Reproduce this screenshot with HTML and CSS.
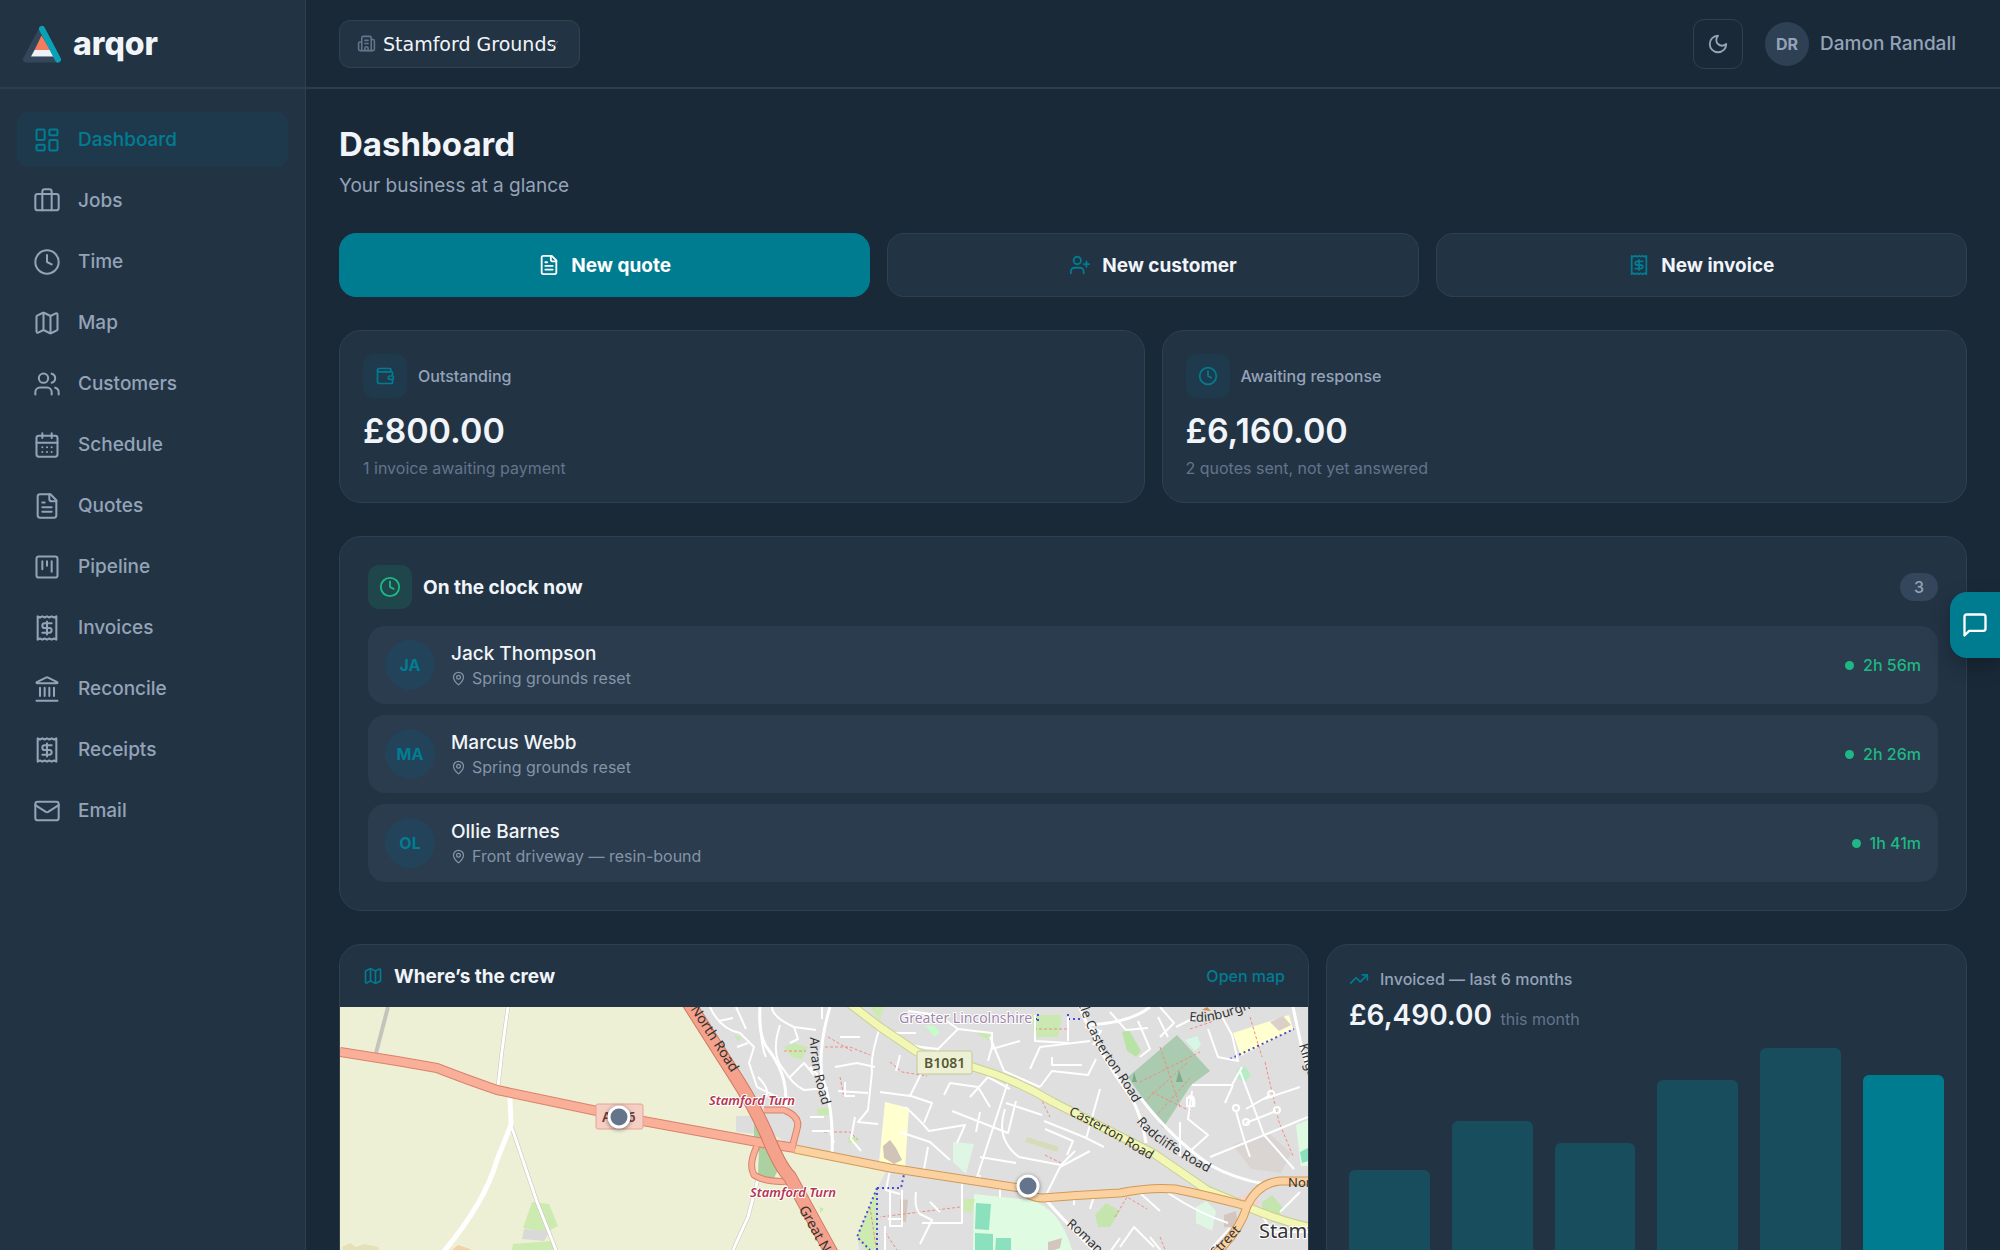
FILE: index.html
```html
<!DOCTYPE html>
<html lang="en">
<head>
    <meta charset="UTF-8">
    <meta name="viewport" content="width=device-width, initial-scale=1.0">
    <title>arqor - Dashboard</title>
    <link rel="stylesheet" href="styles.css">
</head>
<body>

<!-- Icon set -->
<svg class="sprite" aria-hidden="true">
    <symbol id="i-dashboard" viewBox="0 0 24 24"><rect width="7" height="9" x="3" y="3" rx="1"/><rect width="7" height="5" x="14" y="3" rx="1"/><rect width="7" height="9" x="14" y="12" rx="1"/><rect width="7" height="5" x="3" y="16" rx="1"/></symbol>
    <symbol id="i-jobs" viewBox="0 0 24 24"><path d="M16 20V4a2 2 0 0 0-2-2h-4a2 2 0 0 0-2 2v16"/><rect width="20" height="14" x="2" y="6" rx="2"/></symbol>
    <symbol id="i-clock" viewBox="0 0 24 24"><circle cx="12" cy="12" r="10"/><path d="M12 6v6l4 2"/></symbol>
    <symbol id="i-map" viewBox="0 0 24 24"><path d="M14.106 5.553a2 2 0 0 0 1.788 0l3.659-1.83A1 1 0 0 1 21 4.619v12.764a1 1 0 0 1-.553.894l-4.553 2.277a2 2 0 0 1-1.788 0l-4.212-2.106a2 2 0 0 0-1.788 0l-3.659 1.83A1 1 0 0 1 3 19.381V6.618a1 1 0 0 1 .553-.894l4.553-2.277a2 2 0 0 1 1.788 0z"/><path d="M15 5.764v15M9 3.236v15"/></symbol>
    <symbol id="i-users" viewBox="0 0 24 24"><path d="M16 21v-2a4 4 0 0 0-4-4H6a4 4 0 0 0-4 4v2"/><circle cx="9" cy="7" r="4"/><path d="M22 21v-2a4 4 0 0 0-3-3.87M16 3.128a4 4 0 0 1 0 7.744"/></symbol>
    <symbol id="i-calendar" viewBox="0 0 24 24"><path d="M8 2v4M16 2v4M3 10h18"/><rect width="18" height="18" x="3" y="4" rx="2"/><path d="M8 14h.01M12 14h.01M16 14h.01M8 18h.01M12 18h.01M16 18h.01"/></symbol>
    <symbol id="i-file" viewBox="0 0 24 24"><path d="M15 2H6a2 2 0 0 0-2 2v16a2 2 0 0 0 2 2h12a2 2 0 0 0 2-2V7Z"/><path d="M14 2v4a2 2 0 0 0 2 2h4M10 9H8M16 13H8M16 17H8"/></symbol>
    <symbol id="i-kanban" viewBox="0 0 24 24"><rect width="18" height="18" x="3" y="3" rx="2"/><path d="M8 7v7M12 7v4M16 7v9"/></symbol>
    <symbol id="i-receipt" viewBox="0 0 24 24"><path d="M4 2v20l2-1 2 1 2-1 2 1 2-1 2 1 2-1 2 1V2l-2 1-2-1-2 1-2-1-2 1-2-1-2 1Z"/><path d="M16 8h-6a2 2 0 1 0 0 4h4a2 2 0 1 1 0 4H8M12 17.5v-11"/></symbol>
    <symbol id="i-bank" viewBox="0 0 24 24"><path d="M10 18v-7M14 18v-7M18 18v-7M6 18v-7M3 22h18"/><path d="M11.12 2.198a2 2 0 0 1 1.76.006l7.866 3.847c.476.233.31.949-.22.949H3.474c-.53 0-.695-.716-.22-.949z"/></symbol>
    <symbol id="i-mail" viewBox="0 0 24 24"><rect width="20" height="16" x="2" y="4" rx="2"/><path d="m22 7-8.991 5.727a2 2 0 0 1-2.009 0L2 7"/></symbol>
    <symbol id="i-building" viewBox="0 0 24 24"><path d="M10 12h4M10 8h4M14 21v-3a2 2 0 0 0-4 0v3"/><path d="M6 10H4a2 2 0 0 0-2 2v7a2 2 0 0 0 2 2h16a2 2 0 0 0 2-2V9a2 2 0 0 0-2-2h-2"/><path d="M6 21V5a2 2 0 0 1 2-2h8a2 2 0 0 1 2 2v16"/></symbol>
    <symbol id="i-moon" viewBox="0 0 24 24"><path d="M12 3a6 6 0 0 0 9 9 9 9 0 1 1-9-9Z"/></symbol>
    <symbol id="i-user-plus" viewBox="0 0 24 24"><path d="M16 21v-2a4 4 0 0 0-4-4H6a4 4 0 0 0-4 4v2"/><circle cx="9" cy="7" r="4"/><path d="M19 8v6M22 11h-6"/></symbol>
    <symbol id="i-wallet" viewBox="0 0 24 24"><path d="M19 7V4a1 1 0 0 0-1-1H5a2 2 0 0 0 0 4h15a1 1 0 0 1 1 1v4h-3a2 2 0 0 0 0 4h3a1 1 0 0 0 1-1v-2a1 1 0 0 0-1-1"/><path d="M3 5v14a2 2 0 0 0 2 2h15a1 1 0 0 0 1-1v-4"/></symbol>
    <symbol id="i-pin" viewBox="0 0 24 24"><path d="M20 10c0 4.993-5.539 10.193-7.399 11.799a1 1 0 0 1-1.202 0C9.539 20.193 4 14.993 4 10a8 8 0 0 1 16 0"/><circle cx="12" cy="10" r="3"/></symbol>
    <symbol id="i-trend" viewBox="0 0 24 24"><path d="M16 7h6v6"/><path d="m22 7-8.500 8.500-5-5L2 17"/></symbol>
    <symbol id="i-chat" viewBox="0 0 24 24"><path d="M21 15a2 2 0 0 1-2 2H7l-4 4V5a2 2 0 0 1 2-2h14a2 2 0 0 1 2 2z"/></symbol>
</svg>

<div class="app">
    <aside class="sidebar">
        <a class="brand" href="#home">
            <svg class="brand-mark" viewBox="0 0 40 38" aria-hidden="true">
                <path d="M20 4 4 34.500h31" fill="none" stroke="#33465a" stroke-width="6" stroke-linecap="round" stroke-linejoin="round"/>
                <path d="M19.500 10.500 12.500 25h16z" fill="#f47b5c"/>
                <path d="M12.500 25h16l4 6.500H9z" fill="#edf2f9"/>
                <path d="M20 4 36 34.500" fill="none" stroke="#0aa0b5" stroke-width="6" stroke-linecap="round"/>
            </svg>
            arqor
        </a>
        <nav class="nav">
            <a class="active" href="#dashboard"><svg class="icon"><use href="#i-dashboard"/></svg>Dashboard</a>
            <a href="#jobs"><svg class="icon"><use href="#i-jobs"/></svg>Jobs</a>
            <a href="#time"><svg class="icon"><use href="#i-clock"/></svg>Time</a>
            <a href="#map"><svg class="icon"><use href="#i-map"/></svg>Map</a>
            <a href="#customers"><svg class="icon"><use href="#i-users"/></svg>Customers</a>
            <a href="#schedule"><svg class="icon"><use href="#i-calendar"/></svg>Schedule</a>
            <a href="#quotes"><svg class="icon"><use href="#i-file"/></svg>Quotes</a>
            <a href="#pipeline"><svg class="icon"><use href="#i-kanban"/></svg>Pipeline</a>
            <a href="#invoices"><svg class="icon"><use href="#i-receipt"/></svg>Invoices</a>
            <a href="#reconcile"><svg class="icon"><use href="#i-bank"/></svg>Reconcile</a>
            <a href="#receipts"><svg class="icon"><use href="#i-receipt"/></svg>Receipts</a>
            <a href="#email"><svg class="icon"><use href="#i-mail"/></svg>Email</a>
        </nav>
    </aside>

    <div class="page">
        <header class="topbar">
            <div class="company">
                <svg class="icon"><use href="#i-building"/></svg>
                <select aria-label="Company">
                    <option>Stamford Grounds</option>
                </select>
                <svg class="company-arrow" viewBox="0 0 10 10" aria-hidden="true"><path d="M2 6l2 2 5-6"/></svg>
            </div>
            <div class="account">
                <button class="theme" aria-label="Toggle theme"><svg class="icon"><use href="#i-moon"/></svg></button>
                <a class="user" href="#profile"><span class="user-initials">DR</span>Damon Randall</a>
            </div>
        </header>

        <main>
            <div class="heading">
                <h1>Dashboard</h1>
                <p>Your business at a glance</p>
            </div>

            <div class="actions">
                <button class="primary"><svg class="icon"><use href="#i-file"/></svg>New quote</button>
                <button><svg class="icon"><use href="#i-user-plus"/></svg>New customer</button>
                <button><svg class="icon"><use href="#i-receipt"/></svg>New invoice</button>
            </div>

            <div class="stats">
                <section class="card stat">
                    <h2><span class="tile"><svg class="icon"><use href="#i-wallet"/></svg></span>Outstanding</h2>
                    <p class="amount">£800.00</p>
                    <p class="note">1 invoice awaiting payment</p>
                </section>
                <section class="card stat">
                    <h2><span class="tile"><svg class="icon"><use href="#i-clock"/></svg></span>Awaiting response</h2>
                    <p class="amount">£6,160.00</p>
                    <p class="note">2 quotes sent, not yet answered</p>
                </section>
            </div>

            <section class="card clock">
                <div class="clock-head">
                    <span class="tile tile-green"><svg class="icon"><use href="#i-clock"/></svg></span>
                    <h2>On the clock now</h2>
                    <span class="count">3</span>
                </div>
                <ul class="crew">
                    <li>
                        <span class="avatar">JA</span>
                        <div class="who">
                            <strong>Jack Thompson</strong>
                            <span><svg class="icon"><use href="#i-pin"/></svg>Spring grounds reset</span>
                        </div>
                        <span class="elapsed">2h 56m</span>
                    </li>
                    <li>
                        <span class="avatar">MA</span>
                        <div class="who">
                            <strong>Marcus Webb</strong>
                            <span><svg class="icon"><use href="#i-pin"/></svg>Spring grounds reset</span>
                        </div>
                        <span class="elapsed">2h 26m</span>
                    </li>
                    <li>
                        <span class="avatar">OL</span>
                        <div class="who">
                            <strong>Ollie Barnes</strong>
                            <span><svg class="icon"><use href="#i-pin"/></svg>Front driveway — resin-bound</span>
                        </div>
                        <span class="elapsed">1h 41m</span>
                    </li>
                </ul>
            </section>

            <div class="bottom">
                <section class="card where">
                    <div class="where-head">
                        <svg class="icon"><use href="#i-map"/></svg>
                        <h2>Where’s the crew</h2>
                        <a href="#map">Open map</a>
                    </div>
                    <svg class="map" viewBox="0 0 968 300" preserveAspectRatio="xMinYMin slice" role="img" aria-label="Map of Stamford">
                        <defs>
                            <path id="p-north" d="M332-34 350-6 400 72"/>
                            <path id="p-north2" d="M462 200 500 268 530 330"/>
                            <path id="p-arran" d="M474 30C474 60 482 85 492 115"/>
                            <path id="p-little" d="M738-18C746 10 758 38 774 58 788 78 796 92 812 120"/>
                            <path id="p-casterton" d="M730 104C760 118 785 133 830 160"/>
                            <path id="p-radcliffe" d="M799 112C815 132 835 143 880 168"/>
                            <path id="p-edin" d="M849 14C870 17 890 12 960-20"/>
                            <path id="p-kings" d="M959 38 968 68 990 130"/>
                            <path id="p-roman" d="M726 218C740 229 755 245 800 290"/>
                            <path id="p-street" d="M876 250 910 214"/>
                        </defs>
                        <rect width="968" height="300" fill="#eef0d5"/>
                        <!-- built-up area -->
                        <path d="M350 0H968V300H530L517 230 537 181 547 163 455 142 427 123 393 66Z" fill="#e0dfdf"/>
                        <path d="M396 109h20v18l-20-2z" fill="#dddddd"/>
                        <!-- parks, schools and fields -->
                        <g>
                            <path d="M192 195l17 2 9 22-11 6-24-4z" fill="#cdebb0"/>
                            <path d="M184 222l26 2-6 10-22-2z" fill="#d9d9d9"/>
                            <path d="M173 237l38-3 9 12 6 20H166z" fill="#cdebb0"/>
                            <path d="M2 240l8-4 6 4 8-3 14 3 4 10H4z" fill="#e6e0b8"/>
                            <path d="M112 243l6-5 12 4v10h-18z" fill="#f7d0a8"/>
                            <path d="M414 114l14 22-2 10-12-4z" fill="#aad19f"/>
                            <path d="M419 141h12l7 22-4 8-16-3z" fill="#aad19f"/>
                            <path d="M537 181 517 230 530 252h8z" fill="#cdebb0"/>
                            <path d="M545 95l24 6-4 61-26-6z" fill="#ffffcf"/>
                            <path d="M543 139l7-6 6 8 6 12-8 4-10-6z" fill="#d0c3b8"/>
                            <path d="M613 135l21 2-8 30-13-12z" fill="#def6e3"/>
                            <path d="M634 187l56 6q30 8 42 50v57H632z" fill="#dffce2"/>
                            <path d="M636 196l15 1-2 26-14-1zM635 226l18 1v24h-18zM656 231h15v14h-16z" fill="#8be1bd"/>
                            <path d="M624 192h11l-4 14-8-2z" fill="#cdebb0"/>
                            <path d="M837 28 870 64 851 78 823 121 788 70Z" fill="#aacbaf"/>
                            <path d="M792 75l2-10 3 10zM836 75l3-12 4 12z" fill="#7fab8a"/>
                            <path d="M782 25l7-2 12 21-5 6-9-6z" fill="#b9e3a4"/>
                            <path d="M845 33l12-4 4 9-6 6z" fill="#d5f7e5"/>
                            <path d="M893 26l56-18 4 14-52 27z" fill="#ffffcf"/>
                            <path d="M930 15l13-6 8 9-12 6z" fill="#d9d0c9"/>
                            <path d="M897 62l8-2 6 8-6 7-8-4z" fill="#b5ecc4"/>
                            <path d="M956 118l12-5v46l-7 0z" fill="#dffce2"/>
                            <path d="M960 145l8-4v13l-6 2z" fill="#8be1bd"/>
                            <path d="M755 208l11-12 14 8-10 16-12 0z" fill="#c4e6ae"/>
                            <path d="M922 195l10-7 12 14-8 9-14-3z" fill="#c4e6ae"/>
                            <path d="M856 200l10-6 10 10-4 20-16-8z" fill="#def6e3"/>
                            <path d="M884 208l12-4 2 16-14 0z" fill="#d3c6bf"/>
                            <path d="M530 0h14l-4 14z" fill="#cdebb0"/>
                            <path d="M585 18l10 1 5 7-6 4z" fill="#c8facc"/>
                            <path d="M637 27q12-8 15 8M692 8l30 0-4 22-24 0z" fill="#c9e9b0"/>
                            <path d="M444 40l10-4 14 4-6 12-10-2zM394 28l8 2-4 5zM480 200l4 2-4 4z" fill="#c9e9b0"/>
                            <path d="M477 102l12-2v8h-11zM508 130l10 0-2 6-8 0z" fill="#c9e9b0"/>
                            <path d="M687 130l32 10-2 5-32-10z" fill="#d5ddb8"/>
                            <path d="M560 192l8 1-2 22-6-1z" fill="#d3c6bf"/>
                            <path d="M708 235l14-4-2 10-12 4z" fill="#d3c6bf"/>
                            <path d="M893 138l36-12 22 20-10 20-30-4z" fill="#dad5d2"/>
                            <path d="M898 190l12-4 10 10-10 6z" fill="#f3d2d0"/>
                            <path d="M862 3l5-3 4 4z" fill="#d08f55"/>
                        </g>
                        <!-- tracks and footpaths -->
                        <g fill="none" stroke-width="1" stroke-dasharray="3 2" stroke="#f08c82">
                            <path d="M480 40h30l20 8M550 55l12 10 25 4M484 125h26l8 8M500 70l4 20M700 90l10 20M620 200l-80 10M775 210l12-20 20 12M820 230l16 40M925 55l14 60 14 34M850 22l24-8M812 85l40 20M800 75l60-30M820 40l20 60M910 10l12 40M705 148l20 10M694 22h34M488 30l24 14M444 44h22M804 95l44-40M815 110l36-40M530 200l6 40M545 225l12 18"/>
                        </g>
                        <g fill="none" stroke-width="2" stroke-dasharray="2 3" stroke="#4b4bd6">
                            <path d="M537 181h24l4-18M537 181v62M537 181l-20 49 13 13M698 14V4M728 14V4M690 12h8M728 12h12M890 52l64-30"/>
                        </g>
                        <!-- residential streets -->
                        <g class="streets">
                            <path d="M370 0q10 22 30 26l14 14-5 16 8 24 20 10M396 0l10 22M379 14l14-3M420 0q0 38 6 50M408 36l-11 4"/>
                            <path d="M432 0q0 10 22 20l22 3M454 20l4 12-8 4M440 18q-10 30 4 45 8 14 20 20l24-2M450 70l14-14 10 12M470 60l8 8M418 70q12 12 8 20M470 110h14M472 124h18l4 12M482 0v12"/>
                            <path d="M520 0q14 18 30 26l26 0M540 20q-10 30-8 45l-4 38-10 12 20 2M495 60l22-4 18 4M498 84l30 2M515 110l-4 22 10 12M540 85l30 4 12-24M500 30h20M505 75v14l10 0"/>
                            <path d="M548 30q20 10 50 12l20-20-20-14-30-4M618 22l34 4v16l28-8M652 40l-4 14M598 42l-6 20M560 48l-4 16M604 88l6-12 28 4 12 20M630 90l18-20 22 12M612 104l56 22 8-32M568 88l24 8-8 20M640 105l-4 20"/>
                            <path d="M668 75 637 170M666 96l36 12M665 102q-10 30 14 48l42 8 14-14M704 114l40 16 20 10M705 122l28 12-6 14M760 82l-14 50M700 80l12-16 36 4 8-16M690 62l10-22 50-6M650 30l14 34 36 16M565 100q12 10 24 24l36-6-8 18M560 125l30 10 20 18M588 140l-4 22M640 150l36 6"/>
                            <path d="M695 8v26l34 2M728 10v24M712 50v8h30M745 20l16 4-8 14M770 5l16 18 22-2M820 0l14 16-14 14M798 14l12 28-10 8M818 10l10 20M836 20l20-10M868 22l10 28 20 4-6-26M880 6l12 22M852 78l40 0 10-18M893 78l-8 18M900 64l24 64 30 34M870 150l64-26 34-14M896 104q8 30 14 46M930 88l-24 14M936 104l-30 12M960 80l-36 12M852 84l-4 28 20 16-22 20M840 115v34M848 90q8-4 6 10"/>
                            <path d="M705 190l15-30 30-16M640 168l-2 10M550 163l-4 20 14 4M550 183v36h12V183M548 212h14M545 243v-24M576 185q-2 16 4 22l12 6-12 24M622 176v40l-40 0M590 195l10 10M660 182v8M734 190v8M755 186l-5 16M800 186l20 18M828 186q30 20 60 30M780 240l14-20 20 20M810 230l24 30M770 245l10-14M920 205l12 20 36 0M870 243l20-22M884 190l30 16M940 205l20-20"/>
                            <circle cx="931" cy="87" r="3"/>
                            <circle cx="937" cy="103" r="3"/>
                            <circle cx="896" cy="101" r="3"/>
                            <circle cx="906" cy="115" r="3"/>
                            <rect x="847" y="91" width="6" height="8"/>
                        </g>
                        <!-- minor roads -->
                        <g class="minor-case">
                            <path d="M48 0 36 46M168 0Q162 40 158 80M170 90 171 118 157 153Q145 195 105 243L90 270M171 118 197 195 216 243 230 290M418 172 408 210 393 243"/>
                        </g>
                        <g class="minor">
                            <path d="M168 0Q162 40 158 80M170 90 171 118 157 153Q145 195 105 243L90 270M171 118 197 195 216 243 230 290M418 172 408 210 393 243"/>
                            <path d="M490 0Q478 40 482 70 494 100 492 148M420 0Q418 30 428 42 450 70 445 104M738-4Q755 40 785 82 800 100 806 136M800 90Q830 130 870 158 895 172 925 177M748 18Q790 16 810 0M953 0 962 42 968 60M706 193Q720 210 790 280"/>
                        </g>
                        <path class="minor-wide" d="M170 90 171 118 157 153Q145 195 105 243L90 270"/>
                        <!-- yellow and orange roads -->
                        <path class="road b-case" d="M510-3 540 20 577 45Q600 56 633 60 675 72 713 95L813 146 867 183 910 201Q935 212 968 220"/>
                        <path class="road b-road" d="M510-3 540 20 577 45Q600 56 633 60 675 72 713 95L813 146 867 183 910 201Q935 212 968 220"/>
                        <path class="road a-case" d="M455 142 550 161 680 181Q690 191 703 191 740 188 780 186 810 180 835 182 865 188 907 199M870 252Q900 225 907 199 918 176 940 174L970 174"/>
                        <path class="road a-road" d="M455 142 550 161 680 181Q690 191 703 191 740 188 780 186 810 180 835 182 865 188 907 199M870 252Q900 225 907 199 918 176 940 174L970 174"/>
                        <!-- trunk roads -->
                        <g class="road t-case">
                            <path d="M0 45 57 54 97 61Q125 72 157 83L257 104 303 114 423 136 455 141"/>
                            <path d="M424 103H444Q461 110 457 122L452 141M417 139Q408 158 414 168 426 176 450 174" stroke-width="7"/>
                        </g>
                        <g class="road t-road">
                            <path d="M0 45 57 54 97 61Q125 72 157 83L257 104 303 114 423 136 455 141"/>
                            <path d="M424 103H444Q461 110 457 122L452 141M417 139Q408 158 414 168 426 176 450 174" stroke-width="5"/>
                        </g>
                        <path class="road m-case" d="M346-8 393 66Q415 100 427 128 440 160 450 170L490 243 525 310"/>
                        <path class="road m-road" d="M346-8 393 66Q415 100 427 128 440 160 450 170L490 243 525 310"/>
                        <!-- shields -->
                        <rect x="256" y="97" width="47" height="25" rx="2" fill="#f5cfc4" stroke="#e8a394"/>
                        <text class="ref" x="262" y="115" fill="#6e3a34">A606</text>
                        <rect x="577" y="44" width="55" height="23" rx="2" fill="#eef0d5" stroke="#c4ca96"/>
                        <text class="ref" x="584" y="61" fill="#555a33">B1081</text>
                        <!-- place and street names -->
                        <text class="junction" x="369" y="98">Stamford Turn</text>
                        <text class="junction" x="410" y="190">Stamford Turn</text>
                        <text class="district" x="559" y="16">Greater Lincolnshire</text>
                        <text class="town" x="919" y="231">Stamford</text>
                        <g class="street-name">
                            <text class="major" dy="4"><textPath href="#p-north">Great North Road</textPath></text>
                            <text class="major" dy="4"><textPath href="#p-north2">Great North Road</textPath></text>
                            <text dy="4"><textPath href="#p-arran">Arran Road</textPath></text>
                            <text dy="4"><textPath href="#p-little">Little Casterton Road</textPath></text>
                            <text dy="4"><textPath href="#p-casterton">Casterton Road</textPath></text>
                            <text dy="4"><textPath href="#p-radcliffe">Radcliffe Road</textPath></text>
                            <text><textPath href="#p-edin">Edinburgh Road</textPath></text>
                            <text><textPath href="#p-kings">Kings Road</textPath></text>
                            <text><textPath href="#p-roman">Roman Bank</textPath></text>
                            <text><textPath href="#p-street">Street</textPath></text>
                            <text x="948" y="180">North Street</text>
                        </g>
                        <!-- crew positions -->
                        <g class="crew-pin">
                            <circle cx="279" cy="110" r="10"/>
                            <circle cx="688" cy="179" r="10"/>
                        </g>
                    </svg>
                </section>

                <section class="card chart">
                    <h2><svg class="icon"><use href="#i-trend"/></svg>Invoiced — last 6 months</h2>
                    <p class="chart-total"><strong>£6,490.00</strong> this month</p>
                    <div class="bars">
                        <span style="height: 50%"></span>
                        <span style="height: 70%"></span>
                        <span style="height: 61%"></span>
                        <span style="height: 87%"></span>
                        <span style="height: 100%"></span>
                        <span class="current" style="height: 89%"></span>
                    </div>
                </section>
            </div>
        </main>
    </div>
</div>

<button class="chat" aria-label="Open chat"><svg class="icon"><use href="#i-chat"/></svg></button>

</body>
</html>
```
FILE: styles.css
```css
* {
    box-sizing: border-box;
}
body {
    font-family: Inter, "Liberation Sans", sans-serif;
    font-size: 19px;
    background-color: #1a2938;
    color: #f1f5f9;
    margin: 0;
}
h1, h2, p, ul {
    margin: 0;
    padding: 0;
}
a {
    color: inherit;
    text-decoration: none;
}
button {
    font: inherit;
    color: inherit;
    cursor: pointer;
}
.sprite {
    display: none;
}
.icon {
    width: 20px;
    height: 20px;
    flex: none;
    fill: none;
    stroke: currentColor;
    stroke-width: 2;
    stroke-linecap: round;
    stroke-linejoin: round;
}
.app {
    display: flex;
    height: 100vh;
    overflow: hidden;
}

/* Sidebar */
.sidebar {
    width: 306px;
    flex: none;
    background-color: #223344;
    border-right: 1px solid #2f404f;
}
.brand {
    display: flex;
    align-items: center;
    gap: 11px;
    height: 89px;
    padding: 0 22px;
    border-bottom: 2px solid #2c3d4c;
    font-size: 32px;
    font-weight: 800;
}
.brand-mark {
    width: 40px;
    height: 38px;
}
.nav {
    display: flex;
    flex-direction: column;
    gap: 6px;
    padding: 23px 17px;
}
.nav a {
    display: flex;
    align-items: center;
    gap: 17px;
    height: 55px;
    padding: 0 16px;
    border-radius: 11px;
    color: #94a3b8;
    font-weight: 500;
}
.nav .icon {
    width: 28px;
    height: 28px;
    stroke-width: 1.75;
}
.nav .active {
    background-color: #1f394c;
    color: #007d92;
}

/* Top bar */
.page {
    display: flex;
    flex-direction: column;
    flex: 1;
    min-width: 0;
}
.topbar {
    display: flex;
    align-items: center;
    justify-content: space-between;
    height: 89px;
    flex: none;
    padding: 0 33px;
    border-bottom: 2px solid #2c3d4c;
}
.company {
    position: relative;
    display: flex;
    align-items: center;
    gap: 7px;
    width: 241px;
    height: 48px;
    padding: 0 17px;
    background-color: #223344;
    border: 1px solid #32434f;
    border-radius: 11px;
    color: #64748b;
}
.company .icon {
    width: 19px;
    height: 19px;
}
.company select {
    flex: 1;
    min-width: 0;
    appearance: none;
    background: none;
    border: none;
    padding: 0;
    color: #f1f5f9;
    font-family: "DejaVu Sans", sans-serif;
    font-size: 19px;
}
.company-arrow {
    position: absolute;
    right: 20px;
    width: 10px;
    height: 10px;
    fill: none;
    stroke: currentColor;
}
.account {
    display: flex;
    align-items: center;
    gap: 22px;
}
.theme {
    display: grid;
    place-items: center;
    width: 50px;
    height: 50px;
    padding: 0;
    background: none;
    border: 1px solid #2f404f;
    border-radius: 11px;
    color: #94a3b8;
}
.theme .icon {
    width: 22px;
    height: 22px;
}
.user {
    display: flex;
    align-items: center;
    gap: 11px;
    padding-right: 11px;
    color: #94a3b8;
    font-weight: 500;
}
.user-initials {
    display: grid;
    place-items: center;
    width: 44px;
    height: 44px;
    border-radius: 50%;
    background-color: #2e4054;
    font-size: 16px;
    font-weight: 700;
}

/* Content */
main {
    display: flex;
    flex-direction: column;
    gap: 33px;
    flex: 1;
    min-height: 0;
    overflow-y: auto;
    scrollbar-width: none;
    padding: 33px;
}
main > * {
    flex: none;
}
.heading h1 {
    font-size: 33px;
    line-height: 44px;
    font-weight: 700;
}
.heading p {
    margin-top: 6px;
    line-height: 28px;
    color: #94a3b8;
}
.actions {
    display: grid;
    grid-template-columns: repeat(3, 1fr);
    gap: 17px;
}
.actions button {
    display: flex;
    align-items: center;
    justify-content: center;
    gap: 11px;
    height: 64px;
    background-color: #223344;
    border: 1px solid #2f404f;
    border-radius: 17px;
    font-weight: 700;
}
.actions .icon {
    width: 22px;
    height: 22px;
    color: #007d92;
}
.actions .primary {
    background-color: #007c91;
    border-color: #007c91;
    color: #fff;
}
.actions .primary .icon {
    color: #fff;
}
.stats {
    display: grid;
    grid-template-columns: 1fr 1fr;
    gap: 17px;
}
.card {
    background-color: #223344;
    border: 1px solid #2f404f;
    border-radius: 22px;
}
.card h2 {
    font-size: 19px;
    font-weight: 700;
}
.tile {
    display: grid;
    place-items: center;
    width: 44px;
    height: 44px;
    border-radius: 11px;
    background-color: #1f3a4c;
    color: #007d92;
}
.tile-green {
    background-color: #1f464b;
    color: #1db885;
}
.tile-green .icon {
    width: 22px;
    height: 22px;
}
.stat {
    padding: 23px;
}
.card.stat h2,
.card.chart h2 {
    display: flex;
    align-items: center;
    gap: 11px;
    color: #94a3b8;
    font-size: 16px;
    line-height: 24px;
    font-weight: 500;
}
.amount {
    margin-top: 11px;
    font-size: 34px;
    line-height: 44px;
    font-weight: 600;
}
.note {
    margin-top: 4px;
    color: #64748b;
    font-size: 16px;
    line-height: 22px;
}

/* On the clock */
.clock {
    padding: 28px;
}
.clock-head {
    display: flex;
    align-items: center;
    gap: 11px;
    margin-bottom: 17px;
}
.count {
    margin-left: auto;
    padding: 0 14px;
    border-radius: 14px;
    background-color: #33465b;
    color: #94a3b8;
    font-size: 16px;
    line-height: 28px;
    font-weight: 500;
}
.crew {
    display: flex;
    flex-direction: column;
    gap: 11px;
    list-style: none;
}
.crew li {
    display: flex;
    align-items: center;
    gap: 16px;
    height: 78px;
    padding: 0 17px;
    border-radius: 17px;
    background-color: #2a3c4d;
}
.avatar {
    display: grid;
    place-items: center;
    width: 50px;
    height: 50px;
    border-radius: 50%;
    background-color: #23435a;
    color: #007d92;
    font-size: 16px;
    font-weight: 700;
}
.who strong {
    display: block;
    font-weight: 500;
    line-height: 26px;
}
.who span {
    display: flex;
    align-items: center;
    gap: 6px;
    color: #8494a8;
    font-size: 16px;
    line-height: 22px;
}
.who .icon {
    width: 15px;
    height: 15px;
}
.elapsed {
    display: flex;
    align-items: center;
    gap: 9px;
    margin-left: auto;
    color: #1db885;
    font-size: 16px;
    font-weight: 500;
}
.elapsed::before {
    content: "";
    width: 9px;
    height: 9px;
    border-radius: 50%;
    background-color: #1db885;
}

/* Map and chart */
.bottom {
    display: grid;
    grid-template-columns: repeat(5, 1fr);
    gap: 17px;
}
.where {
    grid-column: span 3;
    overflow: hidden;
}
.where-head {
    display: flex;
    align-items: center;
    gap: 11px;
    height: 62px;
    padding: 0 23px;
}
.where-head .icon {
    color: #007d92;
}
.where-head a {
    margin-left: auto;
    color: #007d92;
    font-size: 16px;
    font-weight: 500;
}
.map {
    display: block;
    width: 100%;
    font-family: "Noto Sans", sans-serif;
}
.map path {
    stroke-linejoin: round;
}
.streets {
    fill: none;
    stroke: #fff;
    stroke-width: 2;
}
.minor-case {
    fill: none;
    stroke: #c4c4bc;
    stroke-width: 4;
}
.minor {
    fill: none;
    stroke: #fff;
    stroke-width: 3;
}
.minor-wide {
    fill: none;
    stroke: #fff;
    stroke-width: 5;
}
.road {
    fill: none;
}
.b-case {
    stroke: #c9d08e;
    stroke-width: 9;
}
.b-road {
    stroke: #f3f7b5;
    stroke-width: 7;
}
.a-case {
    stroke: #cf9a5a;
    stroke-width: 9;
}
.a-road {
    stroke: #fcd1a0;
    stroke-width: 7;
}
.t-case {
    stroke: #d9826c;
    stroke-width: 10;
}
.t-road {
    stroke: #f9af98;
    stroke-width: 8;
}
.m-case {
    stroke: #cf7862;
    stroke-width: 14;
}
.m-road {
    stroke: #f4a28c;
    stroke-width: 12;
}
.ref {
    font-size: 14px;
    font-weight: 600;
}
.junction {
    fill: #b5344f;
    stroke: #fff;
    stroke-width: 2;
    paint-order: stroke;
    font-size: 13px;
    font-style: italic;
    font-weight: 600;
}
.district {
    fill: #a087ab;
    stroke: #fff;
    stroke-width: 2;
    paint-order: stroke;
    font-size: 14px;
}
.town {
    fill: #333;
    stroke: #fff;
    stroke-width: 2;
    paint-order: stroke;
    font-size: 20px;
}
.street-name {
    fill: #333;
    font-size: 13px;
}
.street-name .major {
    font-size: 14px;
}
.crew-pin circle {
    fill: #64748b;
    stroke: #fff;
    stroke-width: 3;
    filter: drop-shadow(0 1px 2px rgba(0, 0, 0, 0.5));
}
.chart {
    grid-column: span 2;
    padding: 22px;
}
.chart .icon {
    color: #007d92;
}
.chart-total {
    margin-top: 4px;
    color: #64748b;
    font-size: 16px;
    line-height: 40px;
}
.chart-total strong {
    margin-right: 4px;
    color: #f1f5f9;
    font-size: 28px;
    font-weight: 600;
}
.bars {
    display: flex;
    align-items: flex-end;
    gap: 22px;
    height: 244px;
    margin-top: 9px;
}
.bars span {
    flex: 1;
    border-radius: 6px 6px 0 0;
    background-color: #184d5d;
}
.bars .current {
    background-color: #007c91;
}

.chat {
    position: fixed;
    right: 0;
    top: 592px;
    display: grid;
    place-items: center;
    width: 50px;
    height: 66px;
    padding: 0;
    border: none;
    border-radius: 17px 0 0 17px;
    background-color: #007c91;
    box-shadow: 0 8px 20px rgba(0, 0, 0, 0.25);
    color: #fff;
}
.chat .icon {
    width: 28px;
    height: 28px;
}
```
